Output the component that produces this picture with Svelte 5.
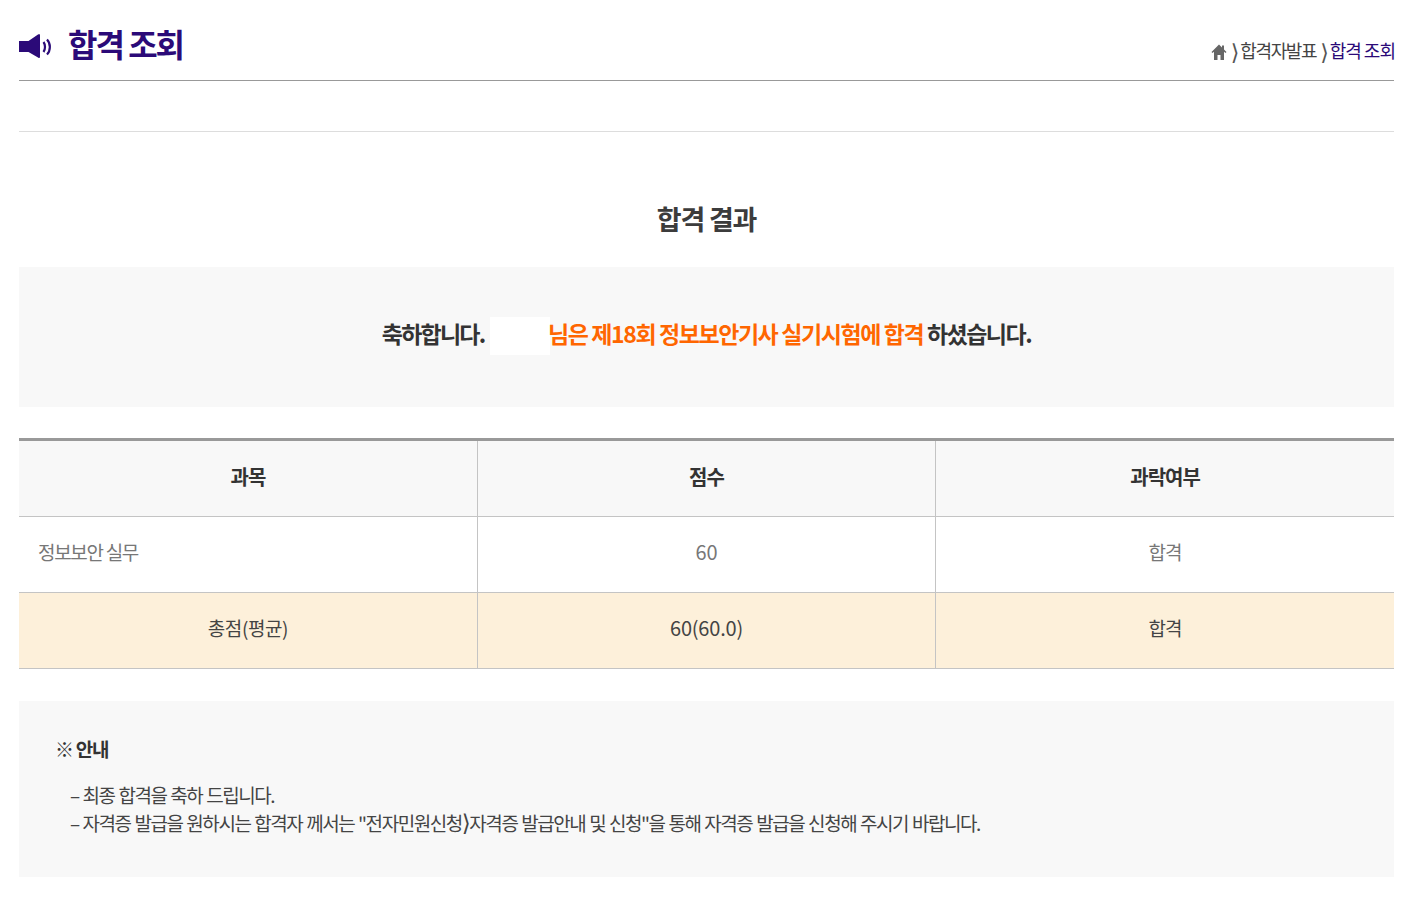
<script>
  const rows = [
    { name: '정보보안 실무', score: '60', result: '합격' }
  ];
</script>

<main>
  <header class="top">
    <h1>
      <svg class="speaker" viewBox="0 0 34 28" width="34" height="28" aria-hidden="true">
        <path d="M0 9h9.500L19 2.500q2-1.500 2 1v21q0 2.500-2 1L9.500 20H0z" fill="#2b0a78" />
        <path d="M24.500 10c2 2.800 2 7.200 0 10" fill="none" stroke="#2b0a78" stroke-width="2.200" />
        <path d="M28 7.500c3.800 4 3.800 11 0 15" fill="none" stroke="#2b0a78" stroke-width="2.200" />
      </svg>
      <span>합격 조회</span>
    </h1>
    <nav class="crumbs">
      <svg class="home" viewBox="0 0 16 16" width="16" height="16" aria-hidden="true">
        <path d="M8 0.500L0.500 8l1 1L3 7.800V16h3.500v-5h3v5H13V7.800L14.500 9l1-1L13 5.500V1.500h-2v2z" fill="#666" />
      </svg>
      <span class="sep">⟩</span><span class="page">합격자발표</span>
      <span class="sep">⟩</span><span class="now">합격 조회</span>
    </nav>
  </header>

  <div class="rule"></div>

  <h2>합격 결과</h2>

  <section class="congrats">
    <p>
      <span class="lead">축하합니다.</span> <span class="blank"></span><em>님은 제18회 정보보안기사 실기시험에 합격</em> 하셨습니다.
    </p>
  </section>

  <table>
    <thead>
      <tr>
        <th>과목</th>
        <th>점수</th>
        <th>과락여부</th>
      </tr>
    </thead>
    <tbody>
      {#each rows as row}
        <tr>
          <td class="left">{row.name}</td>
          <td class="num">{row.score}</td>
          <td>{row.result}</td>
        </tr>
      {/each}
      <tr class="total">
        <td>총점(평균)</td>
        <td class="num">60(60.0)</td>
        <td>합격</td>
      </tr>
    </tbody>
  </table>

  <section class="notice">
    <h3>※ 안내</h3>
    <ul>
      <li>– 최종 합격을 축하 드립니다.</li>
      <li>– 자격증 발급을 원하시는 합격자 께서는 "전자민원신청<span class="gt">⟩</span>자격증 발급안내 및 신청"을 통해 자격증 발급을 신청해 주시기 바랍니다.</li>
    </ul>
  </section>
</main>

<style>
  :global(body) {
    background: #fff;
  }

  main {
    padding: 0 23px 0 19px;
    font-family: "Noto Sans CJK KR", "Noto Sans", "DejaVu Sans", sans-serif;
    color: #333;
    letter-spacing: -1px;
  }

  .top {
    display: flex;
    justify-content: space-between;
    align-items: flex-end;
    height: 80px;
    border-bottom: 1px solid #999;
  }

  h1 {
    display: flex;
    align-items: center;
    gap: 15px;
    margin: 0 0 14px;
    font-size: 32px;
    line-height: 46px;
    font-weight: 700;
    color: #2b0a78;
    letter-spacing: -2px;
  }

  .speaker {
    margin-top: 5px;
  }

  .crumbs {
    display: flex;
    align-items: center;
    font-size: 18px;
    line-height: 26px;
    margin: 0 -1px 17px 0;
    color: #444;
  }

  .home {
    margin-top: 3px;
  }

  .page {
    letter-spacing: -1.4px;
  }

  .sep {
    margin: 0 2px 0 4px;
    font-size: 22px;
    line-height: 1;
    color: #555;
  }

  .now {
    color: #2b0a78;
  }

  .rule {
    margin-top: 50px;
    border-top: 1px solid #ddd;
  }

  h2 {
    margin: 67px 0 28px;
    text-align: center;
    font-size: 27px;
    line-height: 40px;
    font-weight: 700;
    letter-spacing: -1.2px;
    color: #3c3c3c;
  }

  .congrats {
    height: 140px;
    padding-top: 50px;
    box-sizing: border-box;
    background: #f8f8f8;
    text-align: center;
  }

  .congrats p {
    margin: 0;
    font-size: 23px;
    line-height: 32px;
    font-weight: 700;
    letter-spacing: -1.5px;
  }

  .lead {
    letter-spacing: -1.8px;
  }

  .blank {
    display: inline-block;
    width: 60px;
    height: 38px;
    margin: 0 -2px 0 2px;
    background: #fff;
    vertical-align: -12px;
  }

  em {
    font-style: normal;
    color: #ff6600;
    letter-spacing: -1.42px;
  }

  table {
    width: 100%;
    margin-top: 31px;
    border-collapse: collapse;
    table-layout: fixed;
    border-top: 3px solid #999;
  }

  th,
  td {
    height: 76px;
    padding: 0 19px 6px;
    box-sizing: border-box;
    text-align: center;
    font-size: 19px;
    border-bottom: 1px solid #c4c4c4;
    border-left: 1px solid #c4c4c4;
  }

  th:first-child,
  td:first-child {
    border-left: 0;
  }

  th {
    height: 77px;
    padding-bottom: 5px;
    background: #f8f8f8;
    font-size: 20px;
    font-weight: 700;
    color: #333;
  }

  td {
    font-weight: 400;
    color: #777;
  }

  td.left {
    text-align: left;
    letter-spacing: -1.3px;
  }

  td.num {
    letter-spacing: -0.2px;
    font-size: 20px;
  }

  .total td {
    background: #fdf0da;
    color: #444;
  }

  .total td:first-child {
    letter-spacing: -0.4px;
  }

  .notice {
    margin-top: 32px;
    height: 176px;
    box-sizing: border-box;
    padding: 31px 37px;
    background: #f8f8f8;
  }

  h3 {
    margin: 0 0 15px -1px;
    font-size: 19px;
    line-height: 34px;
    font-weight: 700;
    letter-spacing: -1.3px;
    color: #333;
  }

  ul {
    margin: 0;
    padding: 0 0 0 14px;
    list-style: none;
  }

  li {
    font-size: 19px;
    line-height: 28px;
    color: #444;
    letter-spacing: -1.45px;
    word-spacing: 1px;
  }

  .gt {
    font-size: 23px;
    line-height: 0;
  }
</style>
